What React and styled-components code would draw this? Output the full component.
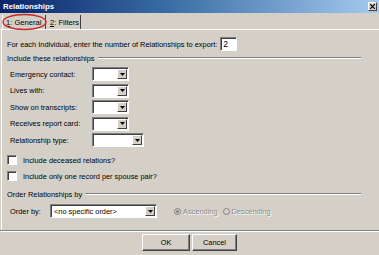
import React from "react";
import styled, { createGlobalStyle } from "styled-components";

const GlobalStyle = createGlobalStyle`
  html, body {
    margin: 0;
    padding: 0;
    background: #d4d0c8;
  }
  body {
    font-family: "Liberation Sans", Arial, sans-serif;
    font-size: 7.4px;
    color: #000;
    white-space: nowrap;
  }
`;

const Window = styled.div`
  position: relative;
  width: 379px;
  height: 255px;
  background: #d4d0c8;
  display: flex;
  flex-direction: column;
  overflow: hidden;
`;

const TitleBar = styled.div`
  height: 13px;
  background: linear-gradient(to right, #0a246a 0%, #3a6ea5 45%, #a6caf0 100%);
  display: flex;
  align-items: center;
  justify-content: space-between;
  padding: 0 2px 0 3px;
  color: #fff;
  font-weight: bold;
  font-size: 7.8px;
`;

const CloseButton = styled.div`
  width: 9px;
  height: 9px;
  background: #d4d0c8;
  border: 1px solid;
  border-color: #fff #404040 #404040 #fff;
  box-sizing: border-box;
  display: flex;
  align-items: center;
  justify-content: center;
`;

const TabStrip = styled.div`
  height: 16px;
  display: flex;
  align-items: stretch;
  padding-left: 2px;
  border-bottom: 1px solid #fff;
`;

const Tab = styled.div`
  display: flex;
  align-items: center;
  padding: 0 3px;
  width: ${(p) => p.$w}px;
  box-sizing: border-box;
  border-right: 1px solid #404040;
  border-left: 1px solid ${(p) => (p.$active ? "#fff" : "transparent")};
  margin-top: 2px;
  font-size: 7.6px;
`;

const Panel = styled.div`
  flex: 1;
  display: flex;
  flex-direction: column;
  padding: 7px 6px 0 5px;
  border-left: 1px solid #fff;
  margin-left: 1px;
`;

const ExportRow = styled.div`
  display: flex;
  align-items: center;
  height: 14px;
  gap: 3px;
`;

const TextBox = styled.div`
  width: 17px;
  height: 14px;
  box-sizing: border-box;
  background: #fff;
  border: 1px solid;
  border-color: #808080 #fff #fff #808080;
  box-shadow: inset 1px 1px 0 #404040;
  padding: 2px 0 0 2px;
  line-height: 9px;
  font-size: 8.5px;
`;

const SectionHeader = styled.div`
  display: flex;
  align-items: center;
  height: 10px;
  margin-top: ${(p) => p.$mt}px;
  gap: 3px;
  padding-right: 12px;

  &::after {
    content: "";
    flex: 1;
    height: 0;
    border-top: 1px solid #808080;
    border-bottom: 1px solid #fff;
  }
`;

const RelGrid = styled.div`
  display: grid;
  grid-template-columns: 82px auto;
  grid-auto-rows: 14px;
  row-gap: 2.5px;
  align-items: center;
  justify-items: start;
  padding-left: 3px;
  margin-top: 4px;
`;

const Combo = styled.div`
  width: ${(p) => p.$w}px;
  height: 14px;
  box-sizing: border-box;
  background: #fff;
  border: 1px solid;
  border-color: #808080 #fff #fff #808080;
  box-shadow: inset 1px 1px 0 #404040;
  display: flex;
  align-items: center;
  justify-content: space-between;
  padding: 1px 1px 1px 3px;
`;

const DropButton = styled.div`
  width: 10px;
  height: 10px;
  box-sizing: border-box;
  background: #d4d0c8;
  border: 1px solid;
  border-color: #fff #404040 #404040 #fff;
  display: flex;
  align-items: center;
  justify-content: center;
  flex-shrink: 0;
`;

const CheckList = styled.div`
  display: flex;
  flex-direction: column;
  gap: 2px;
  margin-top: 6px;
`;

const CheckRow = styled.label`
  display: flex;
  align-items: center;
  height: 14px;
  gap: 6px;
`;

const CheckBox = styled.span`
  width: 10px;
  height: 10px;
  box-sizing: border-box;
  background: #fff;
  border: 1px solid;
  border-color: #808080 #fff #fff #808080;
  box-shadow: inset 1px 1px 0 #404040;
`;

const OrderRow = styled.div`
  display: flex;
  align-items: center;
  height: 14px;
  margin-top: 5px;
  padding-left: 3px;
`;

const OrderLabel = styled.span`
  width: 40px;
`;

const RadioGroup = styled.div`
  display: flex;
  align-items: center;
  margin-left: 17px;
  gap: 5px;
  color: #8a8a8a;
  text-shadow: 1px 1px 0 #fff;
`;

const Radio = styled.span`
  display: flex;
  align-items: center;
  gap: 2px;
`;

const RadioDot = styled.span`
  width: 7px;
  height: 7px;
  border-radius: 50%;
  box-sizing: border-box;
  border: 1px solid #808080;
  background: #d4d0c8;
  display: flex;
  align-items: center;
  justify-content: center;

  &::after {
    content: "";
    width: 3px;
    height: 3px;
    border-radius: 50%;
    background: ${(p) => (p.$checked ? "#808080" : "transparent")};
  }
`;

const Footer = styled.div`
  border-top: 1px solid #808080;
  box-shadow: inset 0 1px 0 #fff;
  height: 25px;
  box-sizing: border-box;
  padding-top: 3px;
  display: flex;
  justify-content: center;
  align-items: flex-start;
  gap: 2px;
`;

const Button = styled.div`
  width: ${(p) => p.$w}px;
  height: 17px;
  box-sizing: border-box;
  border: 1px solid;
  border-color: #fff #404040 #404040 #fff;
  box-shadow: inset -1px -1px 0 #808080;
  display: flex;
  align-items: center;
  justify-content: center;
`;

const Ellipse = styled.svg`
  position: absolute;
  left: 2px;
  top: 13px;
  pointer-events: none;
`;

const Arrow = () => (
  <svg width="5" height="3" viewBox="0 0 5 3">
    <path d="M0 0h5L2.5 3z" fill="#000" />
  </svg>
);

const ComboBox = ({ w, children }) => (
  <Combo $w={w}>
    <span>{children}</span>
    <DropButton>
      <Arrow />
    </DropButton>
  </Combo>
);

const relationships = [
  { label: "Emergency contact:", w: 37 },
  { label: "Lives with:", w: 37 },
  { label: "Show on transcripts:", w: 37 },
  { label: "Receives report card:", w: 37 },
  { label: "Relationship type:", w: 52 },
];

export default function App() {
  return (
    <Window>
      <GlobalStyle />
      <TitleBar>
        <span>Relationships</span>
        <CloseButton>
          <svg width="5" height="5" viewBox="0 0 5 5">
            <path d="M0 0L5 5M5 0L0 5" stroke="#000" strokeWidth="1.2" />
          </svg>
        </CloseButton>
      </TitleBar>
      <TabStrip>
        <Tab $w={44} $active>
          <span>
            <u>1</u>: General
          </span>
        </Tab>
        <Tab $w={35}>
          <span>
            <u>2</u>: Filters
          </span>
        </Tab>
      </TabStrip>
      <Panel>
        <ExportRow>
          <span>For each Individual, enter the number of Relationships to export:</span>
          <TextBox>2</TextBox>
        </ExportRow>
        <SectionHeader $mt={2}>Include these relationships</SectionHeader>
        <RelGrid>
          {relationships.map((r) => (
            <React.Fragment key={r.label}>
              <span>{r.label}</span>
              <ComboBox w={r.w} />
            </React.Fragment>
          ))}
        </RelGrid>
        <CheckList>
          <CheckRow>
            <CheckBox />
            Include deceased relations?
          </CheckRow>
          <CheckRow>
            <CheckBox />
            Include only one record per spouse pair?
          </CheckRow>
        </CheckList>
        <SectionHeader $mt={6}>Order Relationships by</SectionHeader>
        <OrderRow>
          <OrderLabel>Order by:</OrderLabel>
          <ComboBox w={107}>&lt;no specific order&gt;</ComboBox>
          <RadioGroup>
            <Radio>
              <RadioDot $checked />
              Ascending
            </Radio>
            <Radio>
              <RadioDot />
              Descending
            </Radio>
          </RadioGroup>
        </OrderRow>
      </Panel>
      <Footer>
        <Button $w={48}>OK</Button>
        <Button $w={45}>Cancel</Button>
      </Footer>
      <Ellipse width="46" height="18" viewBox="0 0 46 18">
        <ellipse cx="22.5" cy="9" rx="21.5" ry="7.5" fill="none" stroke="#c8282a" strokeWidth="1.4" />
      </Ellipse>
    </Window>
  );
}
